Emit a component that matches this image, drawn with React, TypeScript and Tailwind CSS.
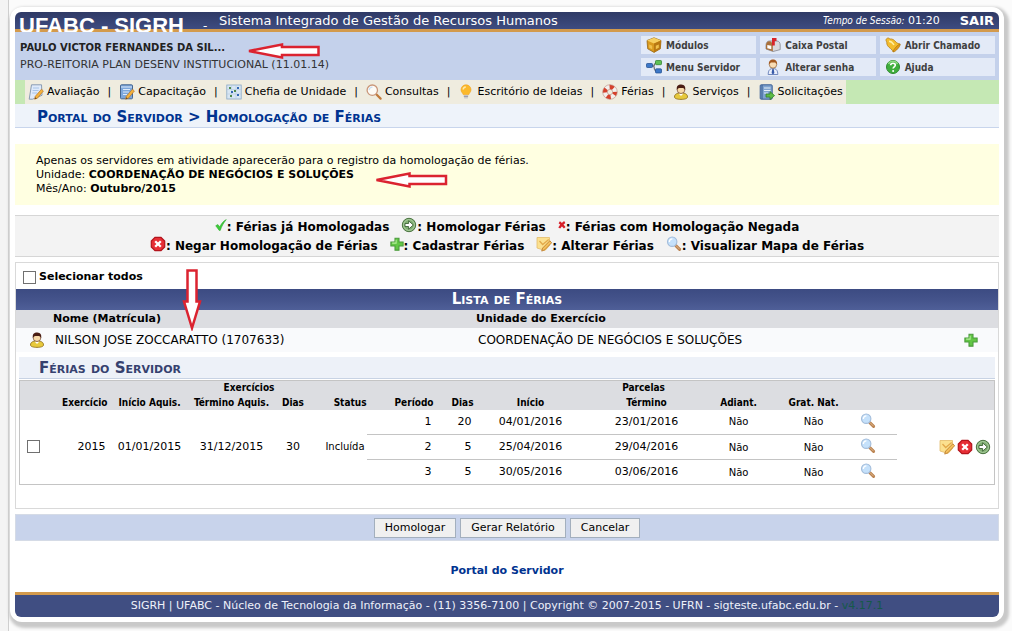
import type { ReactNode } from "react";

const VERDANA = "font-['DejaVu_Sans',Verdana,sans-serif]";
const TAHOMA = "font-['DejaVu_Sans_Condensed','DejaVu_Sans',Tahoma,sans-serif]";

function Icon({ children, className = "size-4" }: { children: ReactNode; className?: string }) {
  return (
    <svg viewBox="0 0 16 16" className={`inline-block shrink-0 ${className}`} aria-hidden="true">
      {children}
    </svg>
  );
}

const PENCIL = (
  <>
    <path d="M13.5 5.2l1.900 1.800-6 7.200-2.800 1 .7-2.900z" fill="#f4b23c" stroke="#b9772a" strokeWidth=".7" />
    <path d="M6.900 15.100l.5-1.900 1.300 1.200z" fill="#5b3b18" />
  </>
);

const NotePencil = () => (
  <Icon>
    <path d="M3.500.8h10l.5 10.500-9.500 3.900H1.200z" fill="#dfeafa" stroke="#7f93ad" strokeWidth=".9" />
    <path d="M5 4h6M4.600 6.500h6M4.200 9h5" stroke="#a3c1e6" strokeWidth=".9" />
    {PENCIL}
  </Icon>
);

const BookPencil = () => (
  <Icon>
    <rect x="1.500" y=".8" width="12" height="14" rx="1" fill="#7da7dc" stroke="#45658f" />
    <path d="M2 3h11M4 5.500h7M4 8h6M4 10.500h4" stroke="#dceafa" strokeWidth="1.100" />
    {PENCIL}
  </Icon>
);

const Chart = () => (
  <Icon>
    <rect x=".8" y="1" width="14.400" height="14" fill="#d8e6f3" stroke="#8aa9c6" strokeWidth=".8" />
    <path d="M1 5.500h14M1 10h14M5.500 1v14M10 1v14" stroke="#b5cbe0" strokeWidth=".6" />
    <g fill="#4f8a4a">
      <rect x="3" y="3" width="2" height="2" />
      <rect x="8" y="6" width="2" height="2" />
      <rect x="4" y="11" width="2" height="2" />
    </g>
    <g fill="#3468b5">
      <rect x="11" y="3" width="2" height="2" />
      <rect x="5" y="7" width="2" height="2" />
      <rect x="11" y="10" width="2" height="2" />
    </g>
  </Icon>
);

const Magnifier = ({ className }: { className?: string }) => (
  <Icon className={className}>
    <path d="M9.800 9.600l3.800 3.800" stroke="#b9814f" strokeWidth="3" strokeLinecap="round" />
    <path d="M10 9.600l3.400 3.400" stroke="#e2b98a" strokeWidth="1" strokeLinecap="round" />
    <circle cx="6.200" cy="5.700" r="4.700" fill="#c5e1fb" stroke="#a3bddb" strokeWidth="1.100" />
    <path d="M3.400 6a3 3 0 013-3.200" stroke="#fff" strokeWidth="1.300" fill="none" />
  </Icon>
);

const SearchLens = () => (
  <Icon>
    <path d="M10 10l4.600 4.600" stroke="#c07a3c" strokeWidth="2.200" strokeLinecap="round" />
    <circle cx="6.300" cy="6.200" r="5.200" fill="#fdfbf6" stroke="#c9977a" strokeWidth="1.300" />
    <path d="M3.200 6.100a3.200 3.200 0 013.200-3" stroke="#c9dff2" strokeWidth="1.200" fill="none" />
  </Icon>
);

const Bulb = () => (
  <Icon>
    <path d="M7 .8a5 5 0 00-5 5c0 2.100 1.600 3 2.200 4.800h5.600C10.400 8.800 12 7.900 12 5.800a5 5 0 00-5-5z" fill="#fbb92c" stroke="#f0a01c" strokeWidth=".6" />
    <path d="M4.200 5.600a2.800 2.800 0 012.600-2.700" stroke="#ffe9a8" strokeWidth="1.500" fill="none" />
    <path d="M4.800 11h4.400l-.4 3.600H5.200z" fill="#c9c9cf" />
    <path d="M4.800 12.400h4.300" stroke="#8e8e98" strokeWidth=".8" />
  </Icon>
);

const LifeRing = () => (
  <Icon>
    <circle cx="8" cy="8" r="5" fill="none" stroke="#f3efec" strokeWidth="4.400" />
    <circle cx="8" cy="8" r="5" fill="none" stroke="#d5402b" strokeWidth="4.400" strokeDasharray="4 3.850" strokeDashoffset="1" />
    <circle cx="8" cy="8" r="7.300" fill="none" stroke="#b98a80" strokeWidth=".6" />
    <circle cx="8" cy="8" r="2.700" fill="none" stroke="#b98a80" strokeWidth=".6" />
  </Icon>
);

const Person = () => (
  <Icon>
    <path d="M1.500 13c0-3 2.500-4 6.500-4s6.500 1 6.500 4c0 1.600-3 2.400-6.500 2.400S1.500 14.600 1.500 13z" fill="#e7c93c" stroke="#8a6a14" strokeWidth=".8" />
    <path d="M5.600 9.400L8 12l2.400-2.600z" fill="#fff" />
    <circle cx="8" cy="5.600" r="3.900" fill="#f7d9a8" stroke="#5a2a18" strokeWidth=".6" />
    <path d="M4 6C3 2 5.500.5 8.300.6 11.500.7 13 3 12 6.300 11.500 4.500 10.500 4 9 4 7 4 5 3.600 4 6z" fill="#4a1d14" />
  </Icon>
);

const BookArrow = () => (
  <Icon>
    <rect x="1.200" y=".8" width="12" height="14.400" rx="1" fill="#7fa3cf" stroke="#3a5f95" />
    <path d="M3 1v14" stroke="#34588f" />
    <path d="M5 4h6.500M5 6.500h6.500M5 9h4" stroke="#e4effa" strokeWidth="1.100" />
    <path d="M7 10h4V7.600l4.600 4-4.600 4v-2.500H7z" fill="#5dbb46" stroke="#2c7a1f" strokeWidth=".7" />
  </Icon>
);

const Cube = () => (
  <Icon>
    <path d="M8 .8l7 2.700-.7 8.300L8 15.400l-6.300-3.600L1 3.500z" fill="#d99a1e" stroke="#8a5a0c" strokeWidth=".7" />
    <path d="M8 .8l7 2.700-7 3-7-3z" fill="#f6cf60" />
    <path d="M8 6.500v8.900l6.300-3.600.7-8.300z" fill="#b87812" />
    <path d="M3.200 7.500l3 1.300v3.500l-3-1.600zM12.800 7.500l-3 1.300v3.500l3-1.600z" fill="#f0c14c" />
  </Icon>
);

const Tree = () => (
  <Icon>
    <path d="M5 7H8M13 4H9.500Q8 4 8 7.500T9.500 12H12" fill="none" stroke="#555" />
    <rect x=".5" y="4.500" width="6" height="4" rx=".8" fill="#3d78c8" stroke="#1d4a8c" strokeWidth=".7" />
    <rect x="9.500" y="1.500" width="6" height="4.200" rx=".8" fill="#5fc054" stroke="#2a7d26" strokeWidth=".7" />
    <rect x="9.500" y="9.800" width="6" height="4.200" rx=".8" fill="#3d78c8" stroke="#1d4a8c" strokeWidth=".7" />
  </Icon>
);

const Mailbox = () => (
  <Icon>
    <path d="M1 8.500c0-3 1.500-4.500 3.500-4.500H12c2 0 3.200 1.800 3.200 4v4.600L8 14.500 1 12z" fill="#d9d9de" stroke="#77777f" strokeWidth=".7" />
    <path d="M1 8.500C1 6 2.300 4.200 4.300 4.200S7.800 6 7.800 8.500v5.800L1 12z" fill="#a9703b" />
    <path d="M2.300 8l4 .8v3.400l-4-1z" fill="#fff" />
    <path d="M7 1h4.500v3H9.800v4.500H7z" fill="#d8232a" />
  </Icon>
);

const Worker = () => (
  <Icon>
    <path d="M3.200 15.500c0-4 1.500-6 4.800-6s4.800 2 4.800 6z" fill="#e9eefb" stroke="#5470b0" strokeWidth=".8" />
    <path d="M7.300 10h1.400l.7 4-1.400 1.500L6.600 14z" fill="#3659a8" />
    <circle cx="8" cy="5.500" r="3.700" fill="#f9dcb4" stroke="#8a5a2c" strokeWidth=".7" />
    <path d="M3.900 5.400C3.500 2 5.500.4 8 .4s4.500 1.600 4.100 5L10.500 3.600H5.700z" fill="#a4581e" />
  </Icon>
);

const Bell = () => (
  <Icon>
    <path d="M1.500 1.800c1.300-1.200 2.600-.9 3.400.2 2.700-.4 4.300 1 6 3 1.200 1.300 2.600 1.700 4.200 2L8.200 15c-.6-1.400-1.300-2.500-2.700-3.500C3.200 9.800 1.400 8 1.800 5 .9 4 .700 2.600 1.500 1.800z" fill="#f3bd2e" stroke="#b9831c" strokeWidth=".8" />
    <path d="M4 4.200c2 .1 3.900 1.900 5 3.800" stroke="#fff0a4" strokeWidth="1.400" fill="none" />
    <path d="M8.200 15c-.6-2 5-7.800 6.900-8 .8 2-4.600 8-6.900 8z" fill="#e09a1c" stroke="#a66f0c" strokeWidth=".6" />
  </Icon>
);

const Help = () => (
  <Icon>
    <circle cx="8" cy="8" r="6.500" fill="#3fae3c" stroke="#2f8a2f" />
    <path d="M3.500 5a5 5 0 019 0" fill="none" stroke="#8edb84" strokeWidth="1.500" />
    <path d="M5.700 6.300C5.800 3.500 10.400 3.600 10.300 6.300 10.200 7.800 8.100 7.900 8.100 9.600" fill="none" stroke="#fff" strokeWidth="1.700" />
    <circle cx="8.100" cy="12" r="1" fill="#fff" />
  </Icon>
);

const Check = () => (
  <Icon className="size-3">
    <path d="M1 9l2.800-1.600 2.600 3.200C8.500 6 11 3 15 .8 11.500 5 9 9.600 7 15.200H5.600z" fill="#3ecb3a" stroke="#2fae2d" strokeWidth=".8" />
  </Icon>
);

const GoArrow = () => (
  <Icon>
    <circle cx="8" cy="8" r="6.700" fill="#7fae70" stroke="#4a7340" />
    <circle cx="8" cy="8" r="5.400" fill="none" stroke="#b4d3aa" strokeWidth=".8" />
    <path d="M4 6.500h3.600V3.800L12.300 8l-4.700 4.200V9.500H4z" fill="#fff" stroke="#3c6335" strokeWidth=".9" />
  </Icon>
);

const SmallX = () => (
  <Icon className="size-2">
    <path d="M2.500 2.500c3.500 2.500 7 6.500 11 11M13.500 2C9 5 5.500 9 2.500 14" stroke="#d6202a" strokeWidth="4.500" fill="none" />
  </Icon>
);

const Deny = () => (
  <Icon>
    <path d="M5 1.300h6L14.700 5v6L11 14.700H5L1.300 11V5z" fill="#e62e35" stroke="#b3141c" strokeWidth="1.200" />
    <path d="M5.200 5.200l5.600 5.600M10.800 5.200l-5.600 5.600" stroke="#fff" strokeWidth="2.300" />
  </Icon>
);

const Plus = () => (
  <Icon className="size-[14px]">
    <path d="M5.700 1.500h4.600v4.200h4.700v4.600h-4.700V15H5.700v-4.700H1V5.700h4.700z" fill="#62c645" stroke="#4b9a3c" strokeWidth="1.200" />
    <path d="M7 3v4H2.500" fill="none" stroke="#b5ee9b" strokeWidth="1.200" />
  </Icon>
);

const EditNote = () => (
  <Icon>
    <path d="M1 1.500h12.500v8L9 14.500 1 12z" fill="#fbe08f" stroke="#e3bb6a" strokeWidth=".8" />
    <path d="M3.500 5l3.200 3.500 6-5" fill="none" stroke="#e3a94a" strokeWidth="1.300" />
    <path d="M13.800 4.800l1.900 1.900-7 7.200-3 1.200.9-3z" fill="#f4c05c" stroke="#b9772a" strokeWidth=".8" />
  </Icon>
);

function RedArrow({ down = false, className }: { down?: boolean; className: string }) {
  return (
    <svg viewBox={down ? "0 0 20 62" : "0 0 78 18"} className={`pointer-events-none absolute z-10 ${className}`} aria-hidden="true">
      <path
        d={down ? "M5.500 1.500h9v31h3.500L10 59 2 32.500h3.500z" : "M75.500 5v8H39v2.500L6 9l33-6.500V5z"}
        fill="#fff"
        stroke="#db2330"
        strokeWidth="2.500"
      />
    </svg>
  );
}

const MENU = [
  { label: "Avaliação", icon: <NotePencil /> },
  { label: "Capacitação", icon: <BookPencil /> },
  { label: "Chefia de Unidade", icon: <Chart /> },
  { label: "Consultas", icon: <SearchLens /> },
  { label: "Escritório de Ideias", icon: <Bulb /> },
  { label: "Férias", icon: <LifeRing /> },
  { label: "Serviços", icon: <Person /> },
  { label: "Solicitações", icon: <BookArrow /> },
];

const SHORTCUTS = [
  { label: "Módulos", icon: <Cube /> },
  { label: "Caixa Postal", icon: <Mailbox /> },
  { label: "Abrir Chamado", icon: <Bell /> },
  { label: "Menu Servidor", icon: <Tree /> },
  { label: "Alterar senha", icon: <Worker /> },
  { label: "Ajuda", icon: <Help /> },
];

const LEGEND = [
  [
    { label: "Férias já Homologadas", icon: <Check /> },
    { label: "Homologar Férias", icon: <GoArrow /> },
    { label: "Férias com Homologação Negada", icon: <SmallX /> },
  ],
  [
    { label: "Negar Homologação de Férias", icon: <Deny /> },
    { label: "Cadastrar Férias", icon: <Plus /> },
    { label: "Alterar Férias", icon: <EditNote /> },
    { label: "Visualizar Mapa de Férias", icon: <Magnifier /> },
  ],
];

const PARCELAS = [
  { periodo: 1, dias: 20, inicio: "04/01/2016", termino: "23/01/2016" },
  { periodo: 2, dias: 5, inicio: "25/04/2016", termino: "29/04/2016" },
  { periodo: 3, dias: 5, inicio: "30/05/2016", termino: "03/06/2016" },
];

const CHECKBOX = "block size-[13px] appearance-none border border-[#707070] bg-white checked:bg-[#44538a]";
const ACTION = "h-5 border border-[#a3afbd] bg-[#f0f0f0] px-[10px] text-[11px] leading-4 hover:bg-white";

function Header() {
  return (
    <header>
      <div className="flex h-5 items-start overflow-hidden rounded-t-md bg-linear-to-b from-[#2f3a66] to-[#414f85] pr-[5px] pl-1 text-white shadow-[inset_0_-3px_#d39a4c]">
        <h1 className="w-[184px] shrink-0 font-['Liberation_Sans',Arial,sans-serif] text-[22px] leading-[28px] font-bold whitespace-nowrap">
          UFABC - SIGRH
        </h1>
        <span className="w-4 shrink-0 text-[12px] leading-[28px]">-</span>
        <span className="grow text-[13px] leading-[18px]">Sistema Integrado de Gestão de Recursos Humanos</span>
        <span className="pr-5 text-[11px] leading-[18px]">
          <em className={`text-[10px] ${TAHOMA}`}>Tempo de Sessão:</em> 01:20
        </span>
        <a href="#sair" className="text-[13px] leading-[18px] font-bold">SAIR</a>
      </div>
      <div className="relative flex justify-between bg-[#c4d1eb] py-1 pr-1 pl-[5px]">
        <div className="pt-1 text-[#222]">
          <p className="text-[10px] leading-4 font-bold">PAULO VICTOR FERNANDES DA SIL...</p>
          <p className="text-[11px] leading-[18px] text-[#333]">PRO-REITORIA PLAN DESENV INSTITUCIONAL (11.01.14)</p>
        </div>
        <RedArrow className="top-[10px] left-[228px] h-[18px] w-[78px]" />
        <nav aria-label="Atalhos" className={`grid w-[354px] grid-cols-3 gap-1 ${TAHOMA}`}>
          {SHORTCUTS.map((item) => (
            <a
              key={item.label}
              href="#atalho"
              className="flex h-[18px] items-center gap-1 bg-[#e3eaf7] pl-[5px] text-[10px] font-bold whitespace-nowrap text-[#404040]"
            >
              {item.icon}
              {item.label}
            </a>
          ))}
        </nav>
      </div>
      <nav aria-label="Principal" className="flex h-6 bg-[#c5e8b4] pl-[10px]">
        <ul className="flex items-center bg-[#efecdf] px-[3px]">
          {MENU.map((item, i) => (
            <li key={item.label} className="flex items-center">
              {i > 0 && <span className="px-2 text-[11px]">|</span>}
              <a href="#menu" className="flex items-center gap-[3px] text-[11px] whitespace-nowrap">
                {item.icon}
                {item.label}
              </a>
            </li>
          ))}
        </ul>
      </nav>
    </header>
  );
}

function Legend() {
  return (
    <section className="mt-[10px] border-y border-[#d6d6d6] bg-[#f3f3f3] py-px">
      {LEGEND.map((row, i) => (
        <ul key={i} className="flex h-[19px] items-center justify-center gap-3">
          {row.map((item) => (
            <li key={item.label} className="flex items-center text-[12px] font-bold whitespace-nowrap [&>svg]:mb-[3px]">
              {item.icon}: {item.label}
            </li>
          ))}
        </ul>
      ))}
    </section>
  );
}

function VacationTable() {
  return (
    <table className="w-full table-fixed border border-[#c4c4c4] text-center text-[11px]">
      <colgroup>
        <col className="w-[26px]" />
        <col className="w-[62px]" />
        <col className="w-[84px]" />
        <col className="w-[80px]" />
        <col className="w-[43px]" />
        <col className="w-[52px]" />
        <col className="w-[67px]" />
        <col className="w-[40px]" />
        <col className="w-[114px]" />
        <col className="w-[118px]" />
        <col className="w-[66px]" />
        <col className="w-[84px]" />
        <col className="w-[41px]" />
        <col />
      </colgroup>
      <thead className={`bg-[#dcdde1] text-[10px] leading-[14px] ${TAHOMA}`}>
        <tr className="h-[15px]">
          <td colSpan={2} />
          <th colSpan={4} className="pl-6">Exercícios</th>
          <th colSpan={7} className="pl-6">Parcelas</th>
          <td />
        </tr>
        <tr className="h-[14px] whitespace-nowrap">
          <td />
          <th className="text-right">Exercício</th>
          <th>Início Aquis.</th>
          <th>Término Aquis.</th>
          <th>Dias</th>
          <th className="text-right">Status</th>
          <th className="text-right">Período</th>
          <th className="text-right">Dias</th>
          <th>Início</th>
          <th>Término</th>
          <th>Adiant.</th>
          <th>Grat. Nat.</th>
          <td colSpan={2} />
        </tr>
      </thead>
      <tbody>
        {PARCELAS.map((p, i) => (
          <tr key={p.periodo} className="h-[25px]">
            {i === 0 && (
              <>
                <td rowSpan={3} className="pl-[7px]">
                  <input type="checkbox" aria-label="Selecionar exercício 2015" className={CHECKBOX} />
                </td>
                <td rowSpan={3} className="pr-[2px] text-right">2015</td>
                <td rowSpan={3}>01/01/2015</td>
                <td rowSpan={3}>31/12/2015</td>
                <td rowSpan={3}>30</td>
                <td rowSpan={3} className="pr-[2px] text-right text-[10px]">Incluída</td>
              </>
            )}
            <td className="border-b border-[#c4c4c4] pr-[2px] text-right">{p.periodo}</td>
            <td className="border-b border-[#c4c4c4] pr-[2px] text-right">{p.dias}</td>
            <td className="border-b border-[#c4c4c4]">{p.inicio}</td>
            <td className="border-b border-[#c4c4c4]">{p.termino}</td>
            <td className="border-b border-[#c4c4c4] text-[10px]">Não</td>
            <td className="border-b border-[#c4c4c4] text-[10px]">Não</td>
            <td className="border-b border-[#c4c4c4] pb-[2px]">
              <button type="button" aria-label="Visualizar Mapa de Férias" className="block pl-1">
                <Magnifier className="block size-4" />
              </button>
            </td>
            {i === 0 && (
              <td rowSpan={3}>
                <div className="flex justify-end gap-[2px] pr-[3px]">
                  <button type="button" aria-label="Alterar Férias" className="flex"><EditNote /></button>
                  <button type="button" aria-label="Negar Homologação" className="flex"><Deny /></button>
                  <button type="button" aria-label="Homologar Férias" className="flex"><GoArrow /></button>
                </div>
              </td>
            )}
          </tr>
        ))}
      </tbody>
    </table>
  );
}

export default function App() {
  return (
    <div className={`min-h-screen bg-[#f4f4f4] text-black ${VERDANA}`}>
      <div className="ml-2 border-l border-[#cfcfcf] bg-[#fbfbfb] pt-[7px] pr-2 pb-[9px] pl-px">
        <div className="rounded-xl bg-white p-[5px] shadow-[2px_3px_3px_3px_#c9c9c9]">
          <Header />

          <h2 className="h-6 border-b border-[#c8d5ec] bg-[#eef3fa] pl-[22px] text-[15px] leading-[26px] font-bold text-[#003390] [font-variant:small-caps]">
            Portal do Servidor &gt; Homologação de Férias
          </h2>

          <section className="relative mt-4 bg-[#ffffe1] px-[21px] pt-[10px] pb-[9px] text-[11px] leading-[14px]">
            <p>Apenas os servidores em atividade aparecerão para o registro da homologação de férias.</p>
            <p>Unidade: <strong>COORDENAÇÃO DE NEGÓCIOS E SOLUÇÕES</strong></p>
            <p>Mês/Ano: <strong>Outubro/2015</strong></p>
            <RedArrow className="top-[27px] left-[354px] h-[18px] w-[81px]" />
          </section>

          <Legend />

          <form>
            <section className="relative mt-[5px] border border-[#d9d9d9] pb-[23px]">
              <label className="flex h-[26px] items-center gap-[3px] pt-[2px] pl-[7px] text-[11px] font-bold">
                <input type="checkbox" className={CHECKBOX} />
                Selecionar todos
              </label>
              <RedArrow down className="top-[6px] left-[166px] h-[62px] w-5" />

              <table className="w-full table-fixed text-left text-[11px]">
                <caption className="h-[21px] bg-linear-to-b from-[#3c4b82] via-[#44538b] to-[#4f5f98] text-[15px] leading-[21px] font-bold text-white [font-variant:small-caps]">
                  Lista de Férias
                </caption>
                <colgroup>
                  <col className="w-[37px]" />
                  <col className="w-[423px]" />
                  <col />
                  <col className="w-[40px]" />
                </colgroup>
                <thead className="bg-[#dcdde1]">
                  <tr className="h-[18px]">
                    <td />
                    <th>Nome (Matrícula)</th>
                    <th>Unidade do Exercício</th>
                    <td />
                  </tr>
                </thead>
                <tbody>
                  <tr className="h-6 bg-[#f9fafc] text-[12px]">
                    <td className="pl-[13px]">
                      <span className="flex"><Person /></span>
                    </td>
                    <td className="pl-[2px]">NILSON JOSE ZOCCARATTO (1707633)</td>
                    <td className="pl-[2px]">COORDENAÇÃO DE NEGÓCIOS E SOLUÇÕES</td>
                    <td className="pl-[6px]">
                      <button type="button" aria-label="Cadastrar Férias" className="flex"><Plus /></button>
                    </td>
                  </tr>
                </tbody>
              </table>

              <div className="mx-[3px] mt-[5px]">
                <h3 className="mb-px h-[22px] border-b border-[#c8d3e4] bg-[#edf1f8] pl-5 text-[15px] leading-[22px] font-bold text-[#36416f] [font-variant:small-caps]">
                  Férias do Servidor
                </h3>
                <VacationTable />
              </div>
            </section>

            <div className="mt-[5px] flex h-[27px] items-center justify-center gap-1 border border-[#d5dbe6] bg-[#c8d3eb]">
              <button type="button" className={ACTION}>Homologar</button>
              <button type="button" className={ACTION}>Gerar Relatório</button>
              <button type="button" className={ACTION}>Cancelar</button>
            </div>
          </form>

          <p className="pt-[22px] pb-[13px] text-center text-[11px] leading-4 font-bold">
            <a href="#portal" className="text-[#003390]">Portal do Servidor</a>
          </p>

          <footer className="rounded-b-md border-t-[3px] border-[#d39a4c] bg-[#404e82] text-center text-[11px] leading-[22px] text-[#eef1fa]">
            SIGRH | UFABC - Núcleo de Tecnologia da Informação - (11) 3356-7100 | Copyright © 2007-2015 - UFRN - sigteste.ufabc.edu.br -{" "}
            <span className="text-[#16594a]">v4.17.1</span>
          </footer>
        </div>
      </div>
    </div>
  );
}
